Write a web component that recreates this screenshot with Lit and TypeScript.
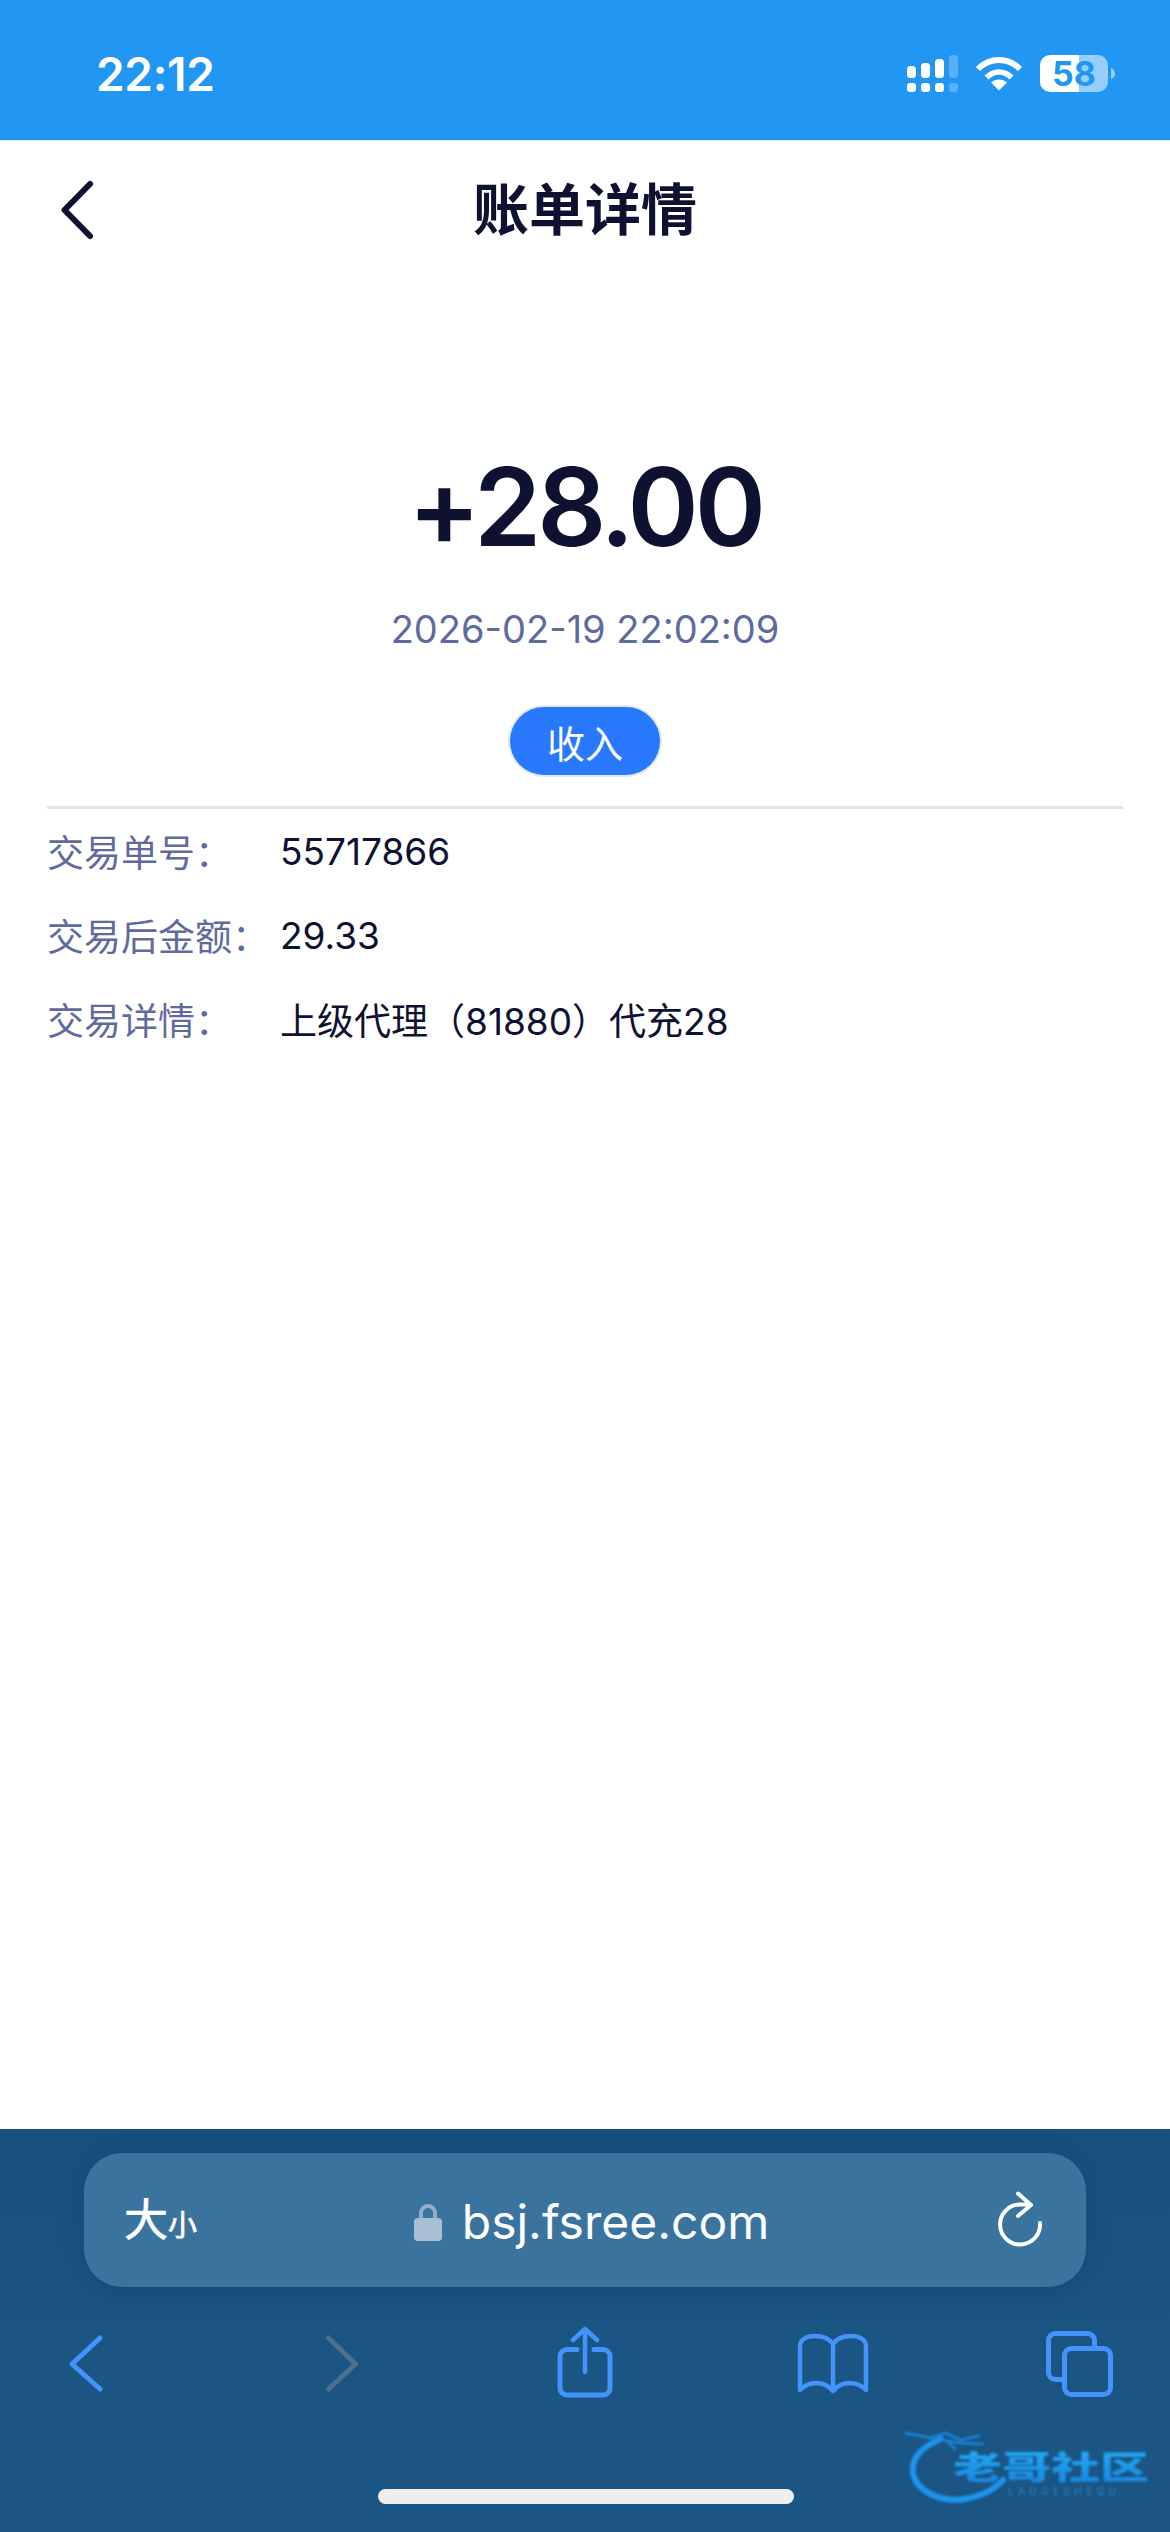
import { LitElement, html, css } from "lit";
import { customElement } from "lit/decorators.js";

const rows = [
  ["交易单号：", "55717866"],
  ["交易后金额：", "29.33"],
  ["交易详情：", "上级代理（81880）代充28"],
];

@customElement("app-root")
export class AppRoot extends LitElement {
  static styles = css`
    :host {
      display: flex;
      flex-direction: column;
      position: relative;
      width: 1170px;
      height: 2532px;
      overflow: hidden;
      background: #fff;
      font-family: Inter, "Noto Sans CJK SC", sans-serif;
      color: #0e1230;
    }
    svg { display: block; flex: none; }
    .status {
      height: 141px;
      flex: none;
      background: #2196f3;
      border-bottom: 1px solid #dbe9f7;
      box-sizing: border-box;
      display: flex;
      align-items: flex-start;
      justify-content: space-between;
      padding: 52px 55px 0 96px;
      color: #fff;
    }
    .time { font-size: 46px; font-weight: 600; line-height: 44px; letter-spacing: -0.3px; }
    .status-icons { display: flex; align-items: flex-start; padding-top: 3px; }
    .wifi { margin-left: 17px; }
    .battery {
      position: relative;
      margin-left: 17px;
      width: 68px;
      height: 37px;
      border-radius: 10px;
      background: linear-gradient(90deg, #fff 0 39px, #97cdfa 39px 100%);
      color: #2196f3;
      font-size: 34px;
      font-weight: 700;
      line-height: 37px;
      text-align: center;
    }
    .nub { margin: 13px 0 0 3px; }
    .nav {
      height: 141px;
      flex: none;
      display: flex;
      align-items: center;
      position: relative;
      justify-content: center;
    }
    .nav-back { position: absolute; left: 58px; top: 38px; }
    .title { font-size: 56px; font-weight: 700; line-height: 60px; margin-top: -4px; }
    .main { flex: 1; display: flex; flex-direction: column; align-items: center; }
    .amount { font-size: 108px; font-weight: 600; line-height: 120px; margin-top: 165px; letter-spacing: -4px; }
    .date { font-size: 38px; line-height: 46px; color: #5f6b9f; margin-top: 39px; }
    .tag {
      margin-top: 53px;
      width: 154px;
      height: 72px;
      box-sizing: border-box;
      border: 2px solid #e4e8f0;
      border-radius: 36px;
      background: #2979ff;
      color: #fff;
      font-size: 38px;
      display: flex;
      align-items: center;
      justify-content: center;
    }
    .details {
      align-self: stretch;
      margin: 29px 47px 0;
      border-top: 3px solid #dfe3ee;
    }
    .row { display: flex; align-items: center; height: 84px; font-size: 37px; }
    .label { width: 233px; color: #5f6b9f; flex: none; }
    .value { color: #0e1230; }
    .toolbar {
      height: 403px;
      flex: none;
      box-sizing: border-box;
      padding-top: 24px;
      background: linear-gradient(180deg, #16507e 0%, #1b5583 55%, #1b5583 100%);
    }
    .url {
      margin: 0 84px;
      height: 134px;
      border-radius: 38px;
      background: #3b739f;
      box-shadow: 0 6px 24px rgba(10, 50, 90, 0.25);
      display: grid;
      grid-template-columns: 1fr auto 1fr;
      align-items: center;
      padding: 0 41px 0 40px;
      color: #fff;
    }
    .size { display: flex; align-items: baseline; line-height: 1; -webkit-text-stroke: 0.7px #fff; }
    .size-big { font-size: 44px; }
    .size-small { font-size: 29px; }
    .site { display: flex; align-items: center; gap: 20px; font-size: 48px; line-height: 60px; margin: 3px 0 0 14px; }
    .reload { justify-self: end; }
    .tools {
      display: flex;
      justify-content: space-between;
      padding: 39px 52px 0 48px;
      fill: none;
      stroke: #4493fb;
      stroke-width: 5;
      stroke-linecap: round;
      stroke-linejoin: round;
    }
    .disabled { stroke: #4e6f8d; }
    .home {
      position: absolute;
      left: 378px;
      top: 2489px;
      width: 416px;
      height: 15px;
      border-radius: 8px;
      background: #eeeeee;
    }
    .mark {
      position: absolute;
      left: 905px;
      top: 2425px;
      width: 265px;
      height: 85px;
      filter: blur(0.9px);
    }
    .mark svg { position: absolute; left: 0; top: 0; }
    .mark-text {
      position: absolute;
      left: 48px;
      top: 15px;
      font-size: 49px;
      line-height: 56px;
      font-weight: 900;
      white-space: nowrap;
      transform: scaleY(0.66);
      background: linear-gradient(180deg, #23a8f5, #1a84dc);
      -webkit-background-clip: text;
      background-clip: text;
      color: transparent;
    }
    .mark-sub {
      position: absolute;
      left: 103px;
      top: 60px;
      font-size: 10px;
      line-height: 12px;
      letter-spacing: 4.4px;
      color: #2a86cc;
      white-space: nowrap;
    }
  `;

  render() {
    return html`
      <div class="status">
        <div class="time">22:12</div>
        <div class="status-icons">
          <svg width="52" height="37" viewBox="0 0 52 37" fill="#fff">
            <rect x="1" y="11" width="9" height="12" rx="3.5" />
            <rect x="15" y="8" width="9" height="15" rx="3.5" />
            <rect x="29" y="4" width="9" height="19" rx="3.5" />
            <rect x="43" y="0" width="9" height="23" rx="3.5" opacity=".25" />
            <rect x="1" y="28" width="9" height="9" rx="3" />
            <rect x="15" y="28" width="9" height="9" rx="3" />
            <rect x="29" y="28" width="9" height="9" rx="3" />
            <rect x="43" y="28" width="9" height="9" rx="3" opacity=".25" />
          </svg>
          <svg class="wifi" width="48" height="36" viewBox="0 0 48 36" fill="none" stroke="#fff">
            <path d="M3 14C15 2 33 2 45 14" stroke-width="6" />
            <path d="M11.500 22.500C19 15 29 15 36.500 22.500" stroke-width="5.500" />
            <path d="M24 35.500L16 27.500C20.500 23.500 27.500 23.500 32 27.500Z" fill="#fff" stroke="none" />
          </svg>
          <div class="battery">58</div>
          <svg class="nub" width="4" height="11" viewBox="0 0 4 11" fill="#97cdfa">
            <path d="M0 0C3 1 4 3 4 5.500C4 8 3 10 0 11Z" />
          </svg>
        </div>
      </div>
      <div class="nav">
        <svg class="nav-back" width="40" height="62" viewBox="0 0 40 62" fill="none" stroke="#0e1230" stroke-width="6" stroke-linecap="round" stroke-linejoin="round">
          <path d="M32 5L6.500 31L32 57" />
        </svg>
        <div class="title">账单详情</div>
      </div>
      <div class="main">
        <div class="amount">+28.00</div>
        <div class="date">2026-02-19 22:02:09</div>
        <div class="tag">收入</div>
        <div class="details">
          ${rows.map(
            ([k, v]) => html`<div class="row"><div class="label">${k}</div><div class="value">${v}</div></div>`
          )}
        </div>
      </div>
      <div class="toolbar">
        <div class="url">
          <div class="size"><span class="size-big">大</span><span class="size-small">小</span></div>
          <div class="site">
            <svg width="28" height="38" viewBox="0 0 28 38">
              <path d="M7 17V10a7 7 0 0 1 14 0v7" fill="none" stroke="#93aec9" stroke-width="4" />
              <rect x="0" y="15" width="28" height="23" rx="4" fill="#a9bfd6" />
            </svg>
            <span>bsj.fsree.com</span>
          </div>
          <svg class="reload" width="50" height="60" viewBox="0 0 50 60" fill="none" stroke="#fff" stroke-width="4" stroke-linecap="round" stroke-linejoin="round">
            <path d="M45 33A20 20 0 1 1 25 14.500H34" />
            <path d="M23 3.500L36 15L23 26" />
          </svg>
        </div>
        <div class="tools">
          <svg width="76" height="76" viewBox="0 0 76 76"><path d="M52 12L24 38L52 63" /></svg>
          <svg class="disabled" width="76" height="76" viewBox="0 0 76 76"><path d="M31.500 12L58.500 38L31.500 63" /></svg>
          <svg width="76" height="76" viewBox="0 0 76 76">
            <path d="M32 23.500H22a7 7 0 0 0-7 7V62a7 7 0 0 0 7 7h36a7 7 0 0 0 7-7V30.500a7 7 0 0 0-7-7H49" />
            <path d="M40 46V3M28 14L40 3L52 14" stroke-width="4.500" />
          </svg>
          <svg width="76" height="76" viewBox="0 0 76 76" stroke-width="4.500">
            <path d="M39 18C35 12 28 10 21 10C12 10 6 14 6 20V64C12 58 18 57 22 57C30 57 35 60 39 65C43 60 48 57 56 57C60 57 66 58 72 64V20C72 14 66 10 57 10C50 10 43 12 39 18V65" />
          </svg>
          <svg width="76" height="76" viewBox="0 0 76 76">
            <path d="M20 53.500H13.500a7 7 0 0 1-7-7V14.500a7 7 0 0 1 7-7H45.500a7 7 0 0 1 7 7V20" />
            <rect x="22.500" y="22.500" width="46" height="46" rx="7" />
          </svg>
        </div>
      </div>
      <div class="home"></div>
      <div class="mark">
        <svg width="265" height="85" viewBox="0 0 265 85" fill="none" stroke="#1d95ef" stroke-linecap="round">
          <path d="M36 14C16 22 6 34 8 48C11 66 36 78 60 74C76 71 90 64 98 55" stroke-width="6" />
          <path d="M0 8L26 13L40 8L56 15L74 11M30 14L56 18L78 19M42 16L50 24" stroke-width="2.500" stroke="#1b86dc" />
        </svg>
        <div class="mark-text">老哥社区</div>
        <div class="mark-sub">LAOGESHEQU</div>
      </div>
    `;
  }
}
